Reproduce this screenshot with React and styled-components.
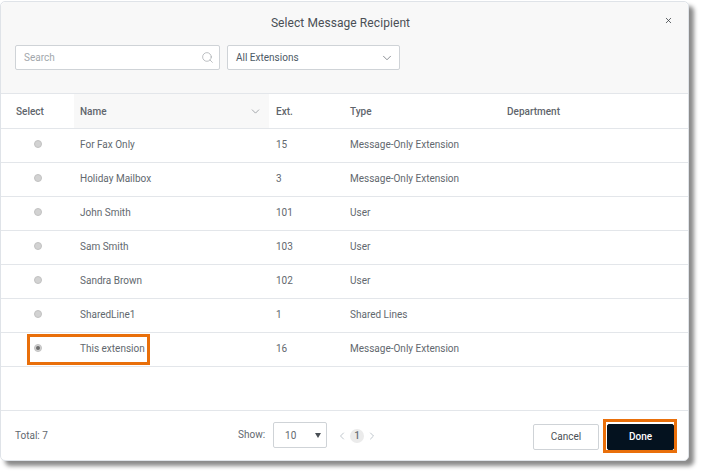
import React from 'react';
import styled, { createGlobalStyle } from 'styled-components';
import { Search, ChevronDown, ChevronLeft, ChevronRight, X } from 'lucide-react';

const GlobalStyle = createGlobalStyle`
  html, body {
    margin: 0;
    padding: 0;
    background: #ffffff;
  }
  body {
    width: 701px;
    height: 473px;
    overflow: hidden;
    font-family: "Roboto", "Liberation Sans", sans-serif;
  }
`;

const Dialog = styled.div`
  position: relative;
  box-sizing: border-box;
  display: flex;
  flex-direction: column;
  width: 689px;
  height: 460px;
  margin-top: 1px;
  background: #ffffff;
  border: 1px solid #dfe3e8;
  border-radius: 5px;
  box-shadow: 5px 5px 4px #8b8b8b;
`;

const Header = styled.div`
  position: relative;
  box-sizing: border-box;
  height: 92px;
  padding: 14px 14px 0;
  background: #f8f8f8;
  border-bottom: 1px solid #e3e6ea;
  border-radius: 5px 5px 0 0;
`;

const Title = styled.div`
  padding-right: 8px;
  text-align: center;
  font-size: 12px;
  line-height: 15px;
  letter-spacing: 0.08px;
  color: #4a4f55;
`;

const CloseButton = styled.span`
  position: absolute;
  top: 14px;
  right: 15px;
  display: flex;
  color: #33383d;
`;

const Filters = styled.div`
  display: flex;
  gap: 7px;
  margin-top: 14px;
`;

const Field = styled.div`
  box-sizing: border-box;
  display: flex;
  align-items: center;
  justify-content: space-between;
  width: ${(p) => p.$width}px;
  height: 25px;
  padding: 0 5px 0 8px;
  background: #ffffff;
  border: 1px solid #cfd3d7;
  border-radius: 2px;
  font-size: 10px;
  color: ${(p) => p.$color};
`;

const Row = styled.div`
  box-sizing: border-box;
  display: grid;
  grid-template-columns: 73px 195px 74px 157px 1fr;
  align-items: center;
  height: ${(p) => p.$height}px;
  border-bottom: 1px solid #e3e6ea;
`;

const HeadCell = styled.div`
  box-sizing: border-box;
  display: flex;
  align-items: center;
  justify-content: space-between;
  height: 100%;
  padding: 0 7px 0 ${(p) => (p.$first ? 15 : p.$sorted ? 6 : 7)}px;
  background: ${(p) => (p.$sorted ? '#f8f8f8' : 'transparent')};
  font-size: 10px;
  font-weight: 500;
  color: #5f656c;
`;

const Cell = styled.div`
  padding: 0 0 2px 6px;
  font-size: 10px;
  color: #62686e;
`;

const ExtCell = styled(Cell)`
  padding-left: 7px;
`;

const RadioCell = styled.div`
  display: flex;
  justify-content: center;
  padding: 0 0 3px 1px;
`;

const Radio = styled.span`
  box-sizing: border-box;
  display: flex;
  align-items: center;
  justify-content: center;
  width: 8px;
  height: 8px;
  border-radius: 50%;
  background: #d2d2d2;
  border: 1px solid #c2c2c2;

  &::after {
    content: '';
    display: ${(p) => (p.$checked ? 'block' : 'none')};
    width: 4px;
    height: 4px;
    border-radius: 50%;
    background: #6d6d6d;
  }
`;

const TableBody = styled.div`
  flex: 1;
`;

const Footer = styled.div`
  box-sizing: border-box;
  display: flex;
  align-items: center;
  height: 50px;
  padding: 0 14px;
  border-top: 1px solid #e3e6ea;
`;

const Total = styled.div`
  width: 223px;
  font-size: 10px;
  color: #62686e;
`;

const ShowLabel = styled.div`
  margin: 0 8px 2px 0;
  font-size: 10px;
  color: #62686e;
`;

const ShowSelect = styled.div`
  box-sizing: border-box;
  display: flex;
  align-items: center;
  justify-content: space-between;
  width: 54px;
  height: 26px;
  margin-bottom: 2px;
  padding: 2px 3px 0 11px;
  border: 1px solid #cfd3d7;
  border-radius: 2px;
  font-size: 10px;
  color: #62686e;
`;

const Caret = styled.span`
  width: 0;
  height: 0;
  border-left: 3.5px solid transparent;
  border-right: 3.5px solid transparent;
  border-top: 5px solid #4a4f55;
  margin-right: 2px;
`;

const Pager = styled.div`
  display: flex;
  align-items: center;
  gap: 2px;
  margin-left: 9px;
  color: #aab3bb;
`;

const PageNumber = styled.span`
  display: flex;
  align-items: center;
  justify-content: center;
  width: 14px;
  height: 14px;
  border-radius: 50%;
  background: #ebebeb;
  font-size: 10px;
  font-weight: 500;
  color: #6c7278;
`;

const Actions = styled.div`
  display: flex;
  gap: 8px;
  margin-left: auto;
  padding-top: 2px;
`;

const Button = styled.div`
  box-sizing: border-box;
  display: flex;
  align-items: center;
  justify-content: center;
  width: ${(p) => (p.$primary ? 67 : 66)}px;
  height: 26px;
  border: 1px solid ${(p) => (p.$primary ? '#04121f' : '#cfd3d7')};
  border-radius: 2px;
  background: ${(p) => (p.$primary ? '#04121f' : '#ffffff')};
  color: ${(p) => (p.$primary ? '#ffffff' : '#4a4f55')};
  font-size: 10px;
  font-weight: ${(p) => (p.$primary ? 500 : 400)};
`;

const Callout = styled.div`
  position: absolute;
  box-sizing: border-box;
  left: ${(p) => p.$left}px;
  top: ${(p) => p.$top}px;
  width: ${(p) => p.$width}px;
  height: ${(p) => p.$height}px;
  border: 3px solid #e96f0a;
`;

const rows = [
  { name: 'For Fax Only', ext: '15', type: 'Message-Only Extension' },
  { name: 'Holiday Mailbox', ext: '3', type: 'Message-Only Extension' },
  { name: 'John Smith', ext: '101', type: 'User' },
  { name: 'Sam Smith', ext: '103', type: 'User' },
  { name: 'Sandra Brown', ext: '102', type: 'User' },
  { name: 'SharedLine1', ext: '1', type: 'Shared Lines' },
  { name: 'This extension', ext: '16', type: 'Message-Only Extension', checked: true },
];

export default function App() {
  return (
    <>
      <GlobalStyle />
      <Dialog>
        <Header>
          <Title>Select Message Recipient</Title>
          <CloseButton>
            <X size={9} strokeWidth={2} />
          </CloseButton>
          <Filters>
            <Field $width={205} $color="#a2a7ac">
              Search
              <Search size={13} strokeWidth={1.2} color="#9a9fa4" />
            </Field>
            <Field $width={173} $color="#4d5a66">
              All Extensions
              <ChevronDown size={14} strokeWidth={1.2} color="#5b6168" />
            </Field>
          </Filters>
        </Header>
        <Row $height={35}>
          <HeadCell $first>Select</HeadCell>
          <HeadCell $sorted>
            Name
            <ChevronDown size={13} strokeWidth={1.2} color="#777d83" />
          </HeadCell>
          <HeadCell>Ext.</HeadCell>
          <HeadCell>Type</HeadCell>
          <HeadCell>Department</HeadCell>
        </Row>
        <TableBody>
          {rows.map((row) => (
            <Row key={row.name} $height={34}>
              <RadioCell>
                <Radio $checked={row.checked} />
              </RadioCell>
              <Cell>{row.name}</Cell>
              <ExtCell>{row.ext}</ExtCell>
              <ExtCell>{row.type}</ExtCell>
              <span />
            </Row>
          ))}
        </TableBody>
        <Footer>
          <Total>Total: 7</Total>
          <ShowLabel>Show:</ShowLabel>
          <ShowSelect>
            10
            <Caret />
          </ShowSelect>
          <Pager>
            <ChevronLeft size={12} strokeWidth={1.5} />
            <PageNumber>1</PageNumber>
            <ChevronRight size={12} strokeWidth={1.5} />
          </Pager>
          <Actions>
            <Button>Cancel</Button>
            <Button $primary>Done</Button>
          </Actions>
        </Footer>
        <Callout $left={26} $top={332} $width={123} $height={31} />
        <Callout $left={602} $top={417} $width={74} $height={34} />
      </Dialog>
    </>
  );
}
